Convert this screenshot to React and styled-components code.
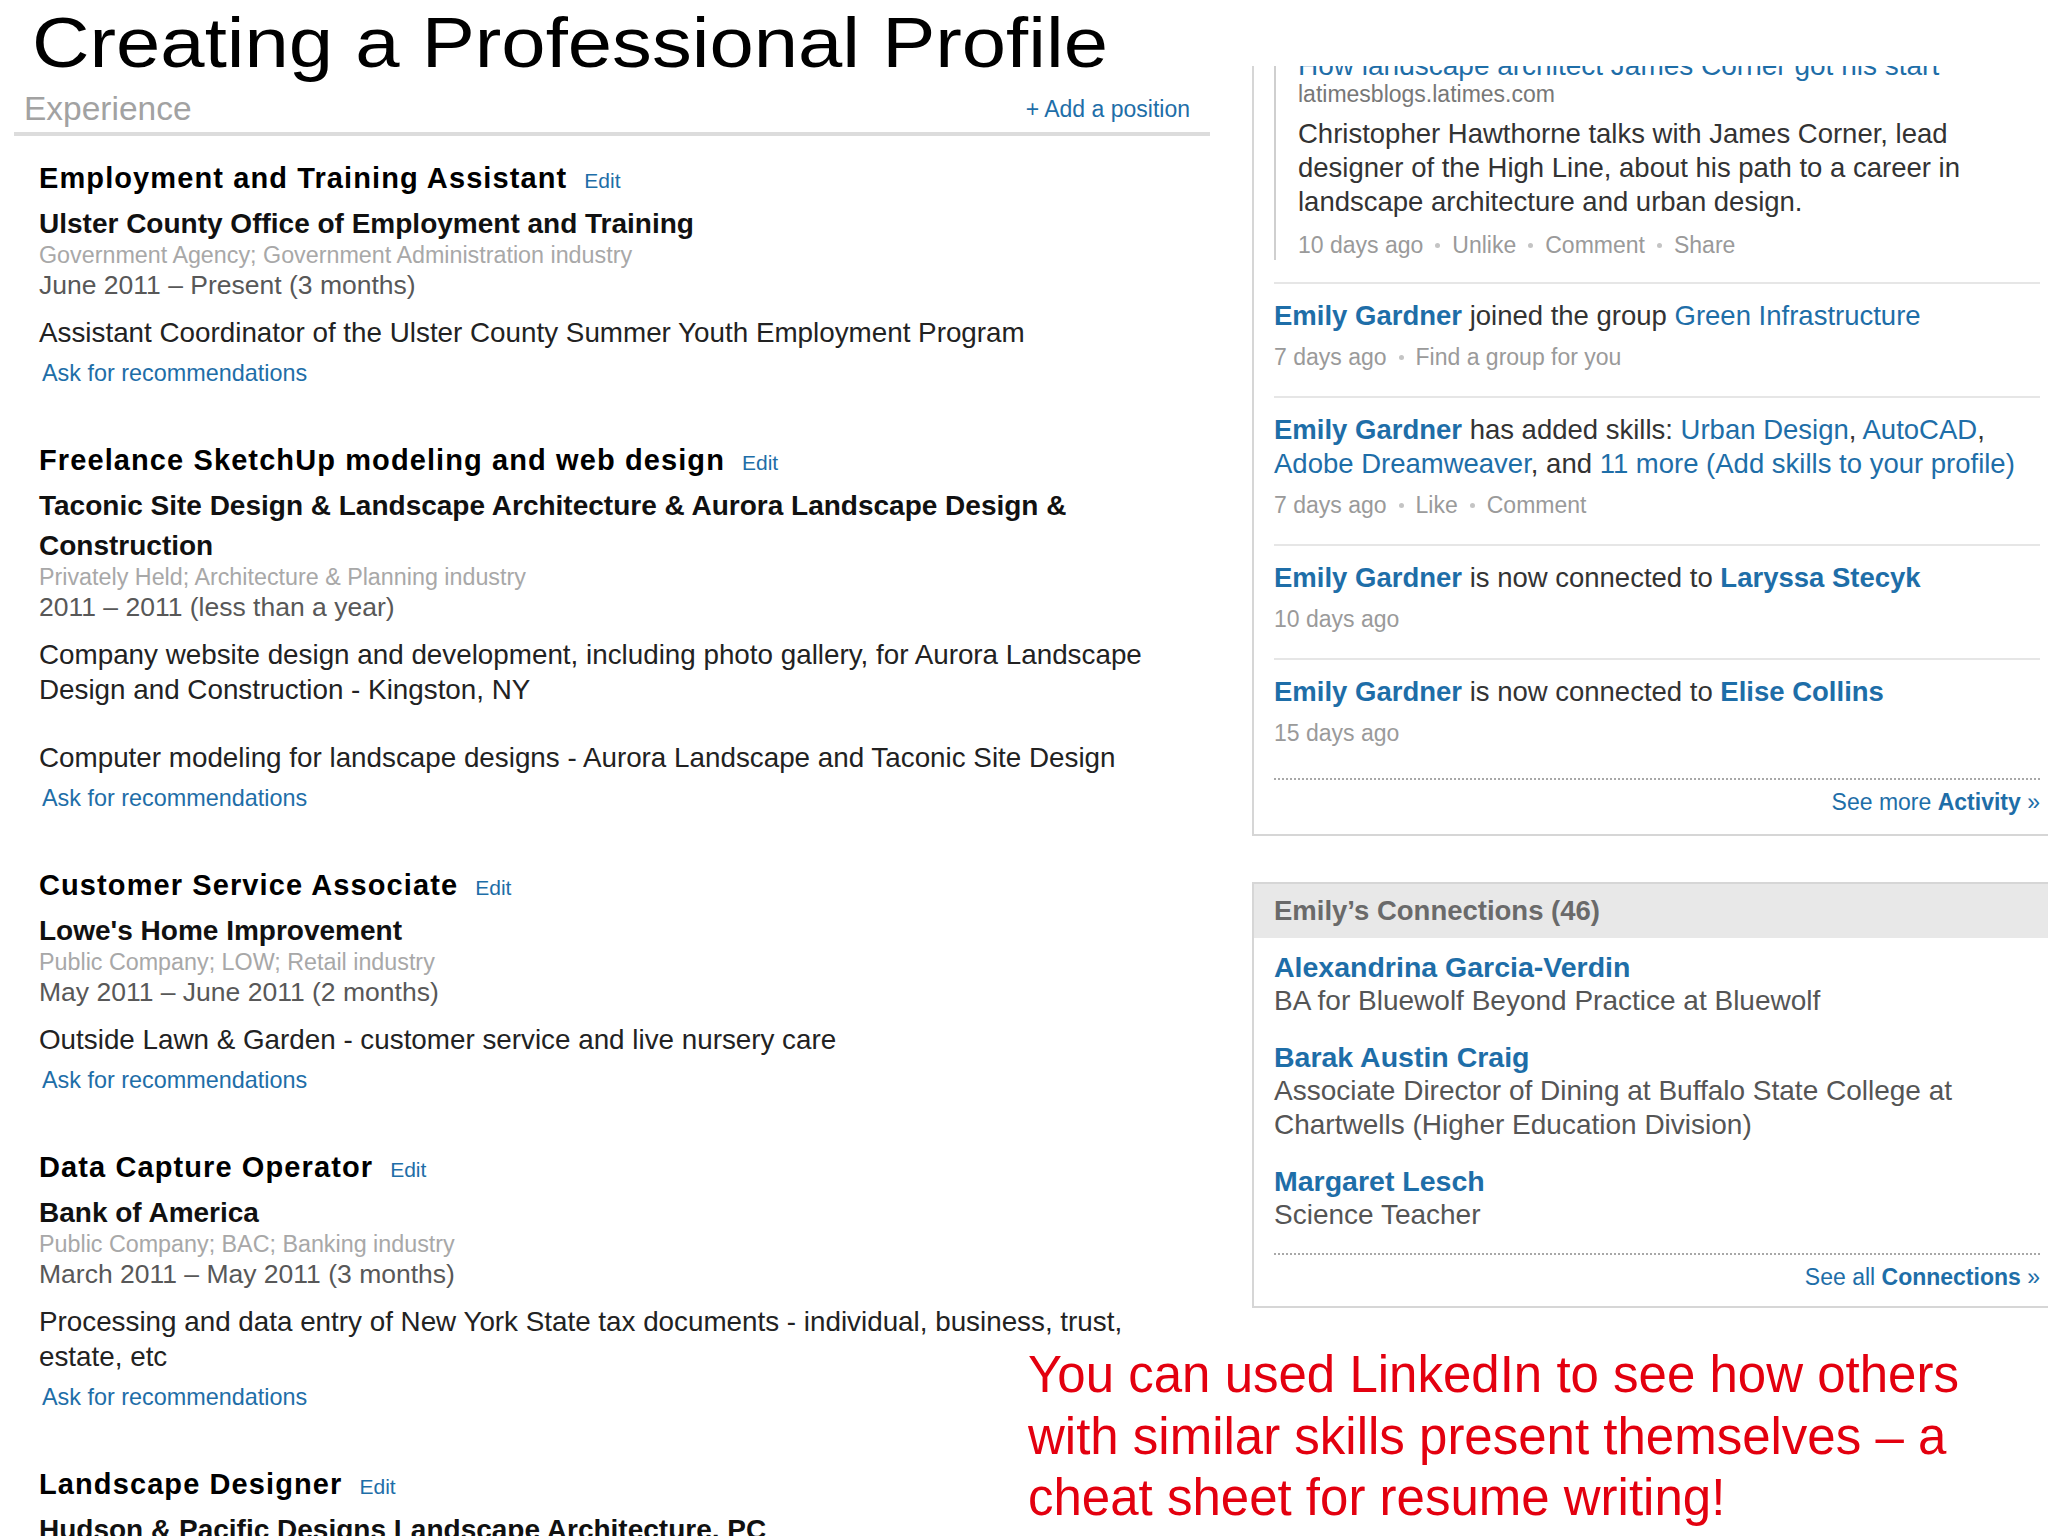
import React from 'react';
import styled, { createGlobalStyle } from 'styled-components';

const GlobalStyle = createGlobalStyle`
  html, body {
    margin: 0;
    padding: 0;
    background: #ffffff;
  }
`;

const BLUE = '#1e6ea8';

const jobs = [
  {
    title: 'Employment and Training Assistant',
    company: 'Ulster County Office of Employment and Training',
    industry: 'Government Agency; Government Administration industry',
    dates: 'June 2011 – Present (3 months)',
    desc: ['Assistant Coordinator of the Ulster County Summer Youth Employment Program'],
  },
  {
    title: 'Freelance SketchUp modeling and web design',
    company: 'Taconic Site Design & Landscape Architecture & Aurora Landscape Design & Construction',
    industry: 'Privately Held; Architecture & Planning industry',
    dates: '2011 – 2011 (less than a year)',
    desc: [
      'Company website design and development, including photo gallery, for Aurora Landscape Design and Construction - Kingston, NY',
      'Computer modeling for landscape designs - Aurora Landscape and Taconic Site Design',
    ],
  },
  {
    title: 'Customer Service Associate',
    company: "Lowe's Home Improvement",
    industry: 'Public Company; LOW; Retail industry',
    dates: 'May 2011 – June 2011 (2 months)',
    desc: ['Outside Lawn & Garden - customer service and live nursery care'],
  },
  {
    title: 'Data Capture Operator',
    company: 'Bank of America',
    industry: 'Public Company; BAC; Banking industry',
    dates: 'March 2011 – May 2011 (3 months)',
    desc: ['Processing and data entry of New York State tax documents - individual, business, trust, estate, etc'],
  },
  {
    title: 'Landscape Designer',
    company: 'Hudson & Pacific Designs Landscape Architecture, PC',
    industry: '',
    dates: '',
    desc: [],
  },
];

const connections = [
  { name: 'Alexandrina Garcia-Verdin', role: 'BA for Bluewolf Beyond Practice at Bluewolf' },
  { name: 'Barak Austin Craig', role: 'Associate Director of Dining at Buffalo State College at Chartwells (Higher Education Division)' },
  { name: 'Margaret Lesch', role: 'Science Teacher' },
];

// --- layout ---

const Page = styled.div`
  position: relative;
  width: 2048px;
  height: 1536px;
  overflow: hidden;
  background: #ffffff;
  display: grid;
  grid-template-columns: 1210px 810px;
  column-gap: 42px;
  align-items: start;
  font-family: "Liberation Sans", Arial, sans-serif;
`;

const LeftCol = styled.div`
  display: flex;
  flex-direction: column;
  padding-left: 14px;
`;

const SlideTitle = styled.h1`
  margin: 7px 0 0 18px;
  font-size: 70px;
  line-height: 72px;
  font-weight: 400;
  color: #000;
  white-space: nowrap;
  transform: scaleX(1.138);
  transform-origin: left center;
`;

const SectionHeader = styled.div`
  display: flex;
  justify-content: space-between;
  align-items: flex-start;
  margin-top: 15px;
  padding: 0 20px 0 10px;
  line-height: 30px;
`;

const SectionLabel = styled.span`
  font-size: 33.5px;
  color: #a2a2a2;
`;

const AddLink = styled.a`
  font-size: 23px;
  color: ${BLUE};
  text-decoration: none;
`;

const Rule = styled.div`
  height: 4px;
  margin-top: 8px;
  background: #dcdcdc;
`;

const JobList = styled.div`
  display: flex;
  flex-direction: column;
  gap: 52px;
  padding: 22px 30px 0 25px;
`;

const Job = styled.div`
  display: flex;
  flex-direction: column;
`;

const HeadingRow = styled.div`
  display: flex;
  align-items: baseline;
  gap: 17px;
  line-height: 40px;
`;

const JobTitle = styled.h3`
  margin: 0;
  font-size: 29px;
  font-weight: 700;
  letter-spacing: 1.1px;
  color: #000;
`;

const EditLink = styled.a`
  font-size: 21px;
  color: ${BLUE};
  text-decoration: none;
`;

const Company = styled.div`
  margin-top: 3px;
  font-size: 28px;
  font-weight: 700;
  line-height: 40px;
  color: #111;
`;

const Industry = styled.div`
  font-size: 23.3px;
  line-height: 23px;
  color: #a8a8a8;
`;

const Dates = styled.div`
  margin-top: 3px;
  font-size: 26.5px;
  line-height: 30px;
  color: #585858;
`;

const Desc = styled.p`
  margin: ${p => (p.$first ? '15px' : '33px')} 0 0;
  font-size: 27.8px;
  line-height: 35px;
  color: #222;
`;

const AskLink = styled.a`
  margin-top: 8px;
  padding-left: 3px;
  font-size: 23.4px;
  line-height: 30px;
  color: ${BLUE};
  text-decoration: none;
`;

// --- right column ---

const RightCol = styled.div`
  display: flex;
  flex-direction: column;
  padding-top: 66px;
`;

const Panel = styled.div`
  border-left: 2px solid #d6d6d6;
  border-bottom: 2px solid #d6d6d6;
  border-top: ${p => (p.$top ? '2px solid #d6d6d6' : 'none')};
  margin-top: ${p => p.$mt || 0}px;
  overflow: hidden;
`;

const PanelBody = styled.div`
  padding: ${p => p.$pt || 0}px 22px 0 20px;
`;

const Article = styled.div`
  margin-top: -15px;
  padding-bottom: 22px;
`;

const Quote = styled.div`
  border-left: 2px solid #cfcfcf;
  padding-left: 22px;
`;

const Headline = styled.a`
  display: block;
  font-size: 28px;
  line-height: 30px;
  color: ${BLUE};
  white-space: nowrap;
  text-decoration: none;
`;

const Source = styled.div`
  font-size: 23px;
  line-height: 26px;
  color: #777;
`;

const QuoteBody = styled.p`
  margin: 10px 0 0;
  font-size: 27.5px;
  line-height: 34px;
  color: #333;
`;

const Meta = styled.div`
  display: flex;
  align-items: center;
  margin-top: ${p => p.$mt}px;
  font-size: 23px;
  line-height: 30px;
  color: #9a9a9a;
`;

const Dot = styled.span`
  width: 5px;
  height: 5px;
  margin: 0 12px;
  border-radius: 50%;
  background: #c4c4c4;
`;

const FeedItem = styled.div`
  border-top: 2px solid #e6e6e6;
  padding: 15px 0 24px;
`;

const FeedText = styled.p`
  margin: 0;
  font-size: 27.5px;
  line-height: 34px;
  color: #333;
`;

const Name = styled.a`
  font-weight: 700;
  color: ${BLUE};
  text-decoration: none;
`;

const Link = styled.a`
  color: ${BLUE};
  text-decoration: none;
`;

const PanelFooter = styled.div`
  margin-top: ${p => p.$mt}px;
  border-top: 2px dotted #a8a8a8;
  padding: 8px 0 ${p => p.$pb}px;
  text-align: right;
  font-size: 23px;
  line-height: 28px;
  color: ${BLUE};

  strong {
    font-weight: 700;
  }
`;

const ConnHeader = styled.div`
  height: 54px;
  padding: 0 20px;
  background: #e8e8e8;
  font-size: 27.5px;
  font-weight: 700;
  line-height: 54px;
  color: #6a6a6a;
`;

const Conn = styled.div`
  & + & {
    margin-top: 22px;
  }
`;

const ConnName = styled.a`
  display: block;
  font-size: 28.5px;
  font-weight: 700;
  line-height: 34px;
  color: ${BLUE};
  text-decoration: none;
`;

const ConnRole = styled.div`
  font-size: 28px;
  line-height: 34px;
  color: #555;
`;

const Callout = styled.p`
  position: absolute;
  left: 1028px;
  top: 1344px;
  margin: 0;
  font-size: 51px;
  line-height: 61.5px;
  color: #e3000f;
  white-space: nowrap;
`;

const MetaLine = ({ items, mt }) => (
  <Meta $mt={mt}>
    {items.map((item, i) => (
      <React.Fragment key={i}>
        {i > 0 && <Dot />}
        <span>{item}</span>
      </React.Fragment>
    ))}
  </Meta>
);

const App = () => (
  <>
    <GlobalStyle />
    <Page>
      <LeftCol>
        <SlideTitle>Creating a Professional Profile</SlideTitle>
        <SectionHeader>
          <SectionLabel>Experience</SectionLabel>
          <AddLink>+ Add a position</AddLink>
        </SectionHeader>
        <Rule />
        <JobList>
          {jobs.map(job => (
            <Job key={job.title}>
              <HeadingRow>
                <JobTitle>{job.title}</JobTitle>
                <EditLink>Edit</EditLink>
              </HeadingRow>
              <Company>{job.company}</Company>
              {job.industry && <Industry>{job.industry}</Industry>}
              {job.dates && <Dates>{job.dates}</Dates>}
              {job.desc.map((d, i) => (
                <Desc key={i} $first={i === 0}>{d}</Desc>
              ))}
              {job.desc.length > 0 && <AskLink>Ask for recommendations</AskLink>}
            </Job>
          ))}
        </JobList>
      </LeftCol>

      <RightCol>
        <Panel>
          <PanelBody>
            <Article>
              <Quote>
                <Headline>How landscape architect James Corner got his start</Headline>
                <Source>latimesblogs.latimes.com</Source>
                <QuoteBody>
                  Christopher Hawthorne talks with James Corner, lead designer of the High Line,
                  about his path to a career in landscape architecture and urban design.
                </QuoteBody>
                <MetaLine mt={11} items={['10 days ago', 'Unlike', 'Comment', 'Share']} />
              </Quote>
            </Article>

            <FeedItem>
              <FeedText>
                <Name>Emily Gardner</Name> joined the group <Link>Green Infrastructure</Link>
              </FeedText>
              <MetaLine mt={9} items={['7 days ago', 'Find a group for you']} />
            </FeedItem>

            <FeedItem>
              <FeedText>
                <Name>Emily Gardner</Name> has added skills: <Link>Urban Design</Link>,{' '}
                <Link>AutoCAD</Link>, <Link>Adobe Dreamweaver</Link>, and <Link>11 more</Link>{' '}
                <Link>(Add skills to your profile)</Link>
              </FeedText>
              <MetaLine mt={9} items={['7 days ago', 'Like', 'Comment']} />
            </FeedItem>

            <FeedItem>
              <FeedText>
                <Name>Emily Gardner</Name> is now connected to <Name>Laryssa Stecyk</Name>
              </FeedText>
              <MetaLine mt={9} items={['10 days ago']} />
            </FeedItem>

            <FeedItem>
              <FeedText>
                <Name>Emily Gardner</Name> is now connected to <Name>Elise Collins</Name>
              </FeedText>
              <MetaLine mt={9} items={['15 days ago']} />
            </FeedItem>

            <PanelFooter $mt={6} $pb={18}>
              See more <strong>Activity</strong> »
            </PanelFooter>
          </PanelBody>
        </Panel>

        <Panel $top $mt={46}>
          <ConnHeader>Emily’s Connections (46)</ConnHeader>
          <PanelBody $pt={12}>
            {connections.map(c => (
              <Conn key={c.name}>
                <ConnName>{c.name}</ConnName>
                <ConnRole>{c.role}</ConnRole>
              </Conn>
            ))}
            <PanelFooter $mt={21} $pb={15}>
              See all <strong>Connections</strong> »
            </PanelFooter>
          </PanelBody>
        </Panel>
      </RightCol>

      <Callout>
        You can used LinkedIn to see how others
        <br />
        with similar skills present themselves – a
        <br />
        cheat sheet for resume writing!
      </Callout>
    </Page>
  </>
);

export default App;
